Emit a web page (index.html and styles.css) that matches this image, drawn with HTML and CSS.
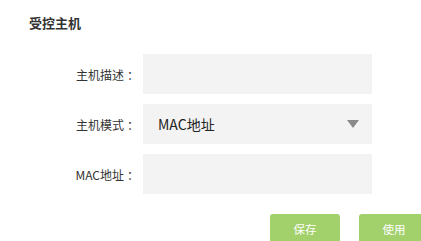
FILE: index.html
```html
<!DOCTYPE html>
<html lang="zh">
<head>
<meta charset="utf-8">
<link rel="stylesheet" href="styles.css">
</head>
<body>
<div class="page">
  <div class="title">受控主机</div>
  <div class="form">
    <div class="row">
      <label class="label">主机描述<span class="colon">：</span></label>
      <div class="field"></div>
    </div>
    <div class="row">
      <label class="label">主机模式<span class="colon">：</span></label>
      <div class="field select">
        <span class="value">MAC地址</span>
        <svg class="arrow" width="12" height="8" viewBox="0 0 12 8"><polygon points="0,0 12,0 6,8" fill="#8a8a8a"/></svg>
      </div>
    </div>
    <div class="row">
      <label class="label">MAC地址<span class="colon">：</span></label>
      <div class="field"></div>
    </div>
  </div>
  <div class="buttons">
    <button class="btn">保存</button>
    <button class="btn">使用</button>
  </div>
</div>
</body>
</html>
```
FILE: styles.css
```css
html, body {
  margin: 0;
  padding: 0;
  background: #fff;
  overflow: hidden;
}
.page {
  width: 421px;
  height: 241px;
  font-family: "Microsoft YaHei", "Noto Sans CJK SC", sans-serif;
  color: #333;
}
.title {
  padding: 14px 0 0 29px;
  font-size: 13px;
  font-weight: bold;
  line-height: 18px;
  color: #333;
}
.form {
  display: flex;
  flex-direction: column;
  gap: 10px;
  margin-top: 22px;
}
.row {
  display: flex;
  align-items: center;
}
.label {
  width: 139px;
  text-align: right;
  font-size: 12px;
  color: #333;
  margin-right: 4px;
}
.colon {
  margin-left: 3px;
}
.field {
  width: 229px;
  height: 40px;
  background: #f3f3f3;
  box-sizing: border-box;
}
.select {
  display: flex;
  align-items: center;
  justify-content: space-between;
  padding: 0 13px 0 15px;
}
.value {
  font-size: 14px;
  color: #222;
}
.buttons {
  display: flex;
  gap: 19px;
  margin: 20px 0 0 270px;
}
.btn {
  flex: none;
  width: 70px;
  height: 30px;
  border: none;
  border-radius: 3px;
  background: #a2d06b;
  color: #fff;
  font-family: "Microsoft YaHei", "Noto Sans CJK SC", sans-serif;
  font-size: 11.5px;
  padding: 0;
}
```
